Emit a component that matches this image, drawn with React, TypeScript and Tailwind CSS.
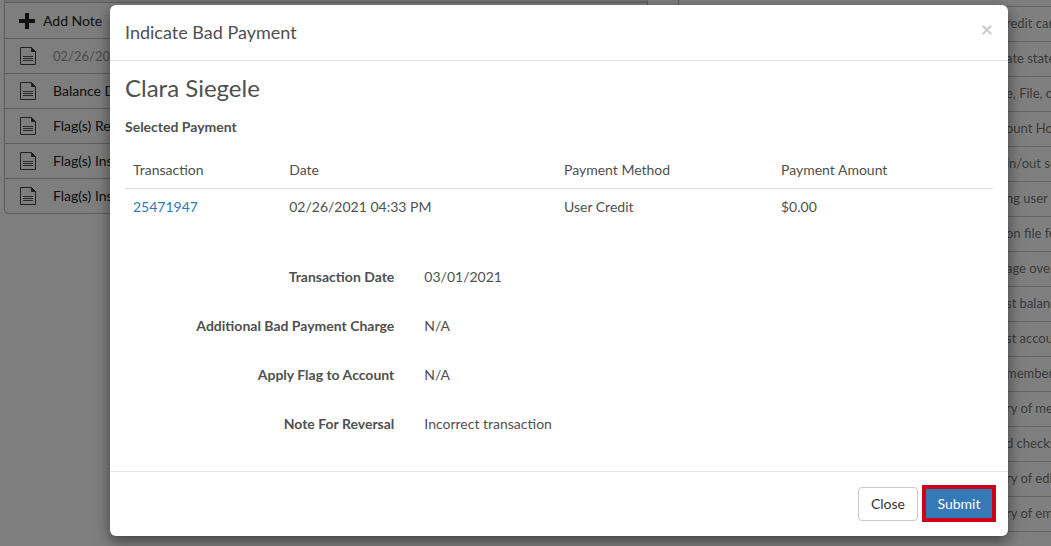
import { useState } from "react";

const notes = [
  { text: "02/26/202", muted: true },
  { text: "Balance D", muted: false },
  { text: "Flag(s) Re", muted: false },
  { text: "Flag(s) Ins", muted: false },
  { text: "Flag(s) Ins", muted: false },
];

const activity = [
  "redit car",
  "ate state",
  "e, File, o",
  "ount Ho",
  "in/out se",
  "ng user i",
  "on file fo",
  "age over",
  "st balanc",
  "st accou",
  "members",
  "ry of me",
  "d checks",
  "ry of edi",
  "ry of em",
];

const details = [
  { label: "Transaction Date", value: "03/01/2021" },
  { label: "Additional Bad Payment Charge", value: "N/A" },
  { label: "Apply Flag to Account", value: "N/A" },
  { label: "Note For Reversal", value: "Incorrect transaction" },
];

function NoteIcon() {
  return (
    <svg className="h-[18px] w-4 shrink-0" viewBox="0 0 16 18" fill="none" stroke="#444" aria-hidden="true">
      <path d="M0.5 0.5H11.5L15.5 4.5V17.5H0.5Z" />
      <path d="M11.5 0.5V4.5H15.5Z" fill="#333" />
      <path d="M3 9.5H13M3 11.5H13M3 13.5H13" stroke="#555" />
    </svg>
  );
}

function NotesPanel() {
  return (
    <section className="flex-1">
      <div className="h-[2px] border-x border-[#ccc] bg-[#e4e4e4]" />
      <ul className="rounded-b border border-[#bbb] bg-[#fcfcfc] text-[#222]">
        <li className="flex h-[35px] items-center gap-2 pl-[14px]">
          <svg className="h-4 w-4" viewBox="0 0 16 16" fill="#222" aria-hidden="true">
            <path d="M6 0H10V6H16V10H10V16H6V10H0V6H6Z" />
          </svg>
          <a href="#add-note">Add Note</a>
        </li>
        {notes.map((note, index) => (
          <li key={index} className="flex h-[35px] items-center gap-[17px] border-t border-[#bbb] pl-[15px]">
            <NoteIcon />
            <span className={note.muted ? "text-[13px] text-[#999]" : ""}>{note.text}</span>
          </li>
        ))}
      </ul>
    </section>
  );
}

function ActivityPanel() {
  return (
    <section className="w-[373px] border-l border-[#bbb]">
      <ul className="mt-[6px] border-b border-[#ccc] text-[13px] text-[#777]">
        {activity.map((text, index) => (
          <li key={index} className="flex h-[35px] items-center border-t border-[#ccc] pb-[2px] pl-[327px] whitespace-nowrap">
            {text}
          </li>
        ))}
      </ul>
    </section>
  );
}

function PaymentTable() {
  return (
    <table className="w-full table-fixed text-left">
      <thead>
        <tr className="border-b border-[#ddd]">
          <th className="w-[18%] p-2 font-normal">Transaction</th>
          <th className="p-2 font-normal">Date</th>
          <th className="w-[217px] p-2 font-normal">Payment Method</th>
          <th className="w-[220px] p-2 font-normal">Payment Amount</th>
        </tr>
      </thead>
      <tbody>
        <tr>
          <td className="p-2">
            <a href="#25471947" className="text-[#337ab7]">25471947</a>
          </td>
          <td className="p-2">02/26/2021 04:33 PM</td>
          <td className="p-2">User Credit</td>
          <td className="p-2">$0.00</td>
        </tr>
      </tbody>
    </table>
  );
}

export default function App() {
  const [open, setOpen] = useState(true);

  return (
    <div className="relative h-screen overflow-hidden bg-white font-[Lato,sans-serif] text-sm text-[#505050]">
      <div className="flex gap-[30px] pl-1">
        <NotesPanel />
        <ActivityPanel />
      </div>

      {open && (
        <div className="absolute inset-0 bg-black/50 pt-[5px] pr-[43px] pl-[110px]">
          <div role="dialog" aria-labelledby="dialog-title" className="rounded-md bg-white shadow-[0_5px_15px_rgba(0,0,0,0.5)]">
            <header className="flex items-start justify-between border-b border-[#e5e5e5] p-[15px]">
              <h4 id="dialog-title" className="text-lg leading-[25px]">Indicate Bad Payment</h4>
              <button
                type="button"
                aria-label="Close dialog"
                className="text-[21px] leading-[18px] font-bold text-[#ccc]"
                onClick={() => setOpen(false)}
              >
                ×
              </button>
            </header>

            <div className="p-[15px]">
              <h3 className="text-2xl leading-6">Clara Siegele</h3>
              <p className="mt-[17px] font-bold">Selected Payment</p>
              <div className="mt-[15px]">
                <PaymentTable />
              </div>
              <dl className="-mx-[15px] mt-[35px]">
                {details.map((item) => (
                  <div key={item.label} className="mb-[15px] grid h-[34px] grid-cols-12 items-center">
                    <dt className="col-span-4 px-[15px] text-right font-bold">{item.label}</dt>
                    <dd className="col-span-8 px-[15px]">{item.value}</dd>
                  </div>
                ))}
              </dl>
            </div>

            <footer className="flex items-center justify-end gap-1 border-t border-[#e5e5e5] px-3 pt-[13px] pb-[14px]">
              <button
                type="button"
                className="h-[34px] rounded border border-[#ccc] bg-white px-3 text-[#333]"
                onClick={() => setOpen(false)}
              >
                Close
              </button>
              <button type="button" className="h-[37px] w-[74px] border-4 border-[#d0021b] bg-[#337ab7] text-white">
                Submit
              </button>
            </footer>
          </div>
        </div>
      )}
    </div>
  );
}
